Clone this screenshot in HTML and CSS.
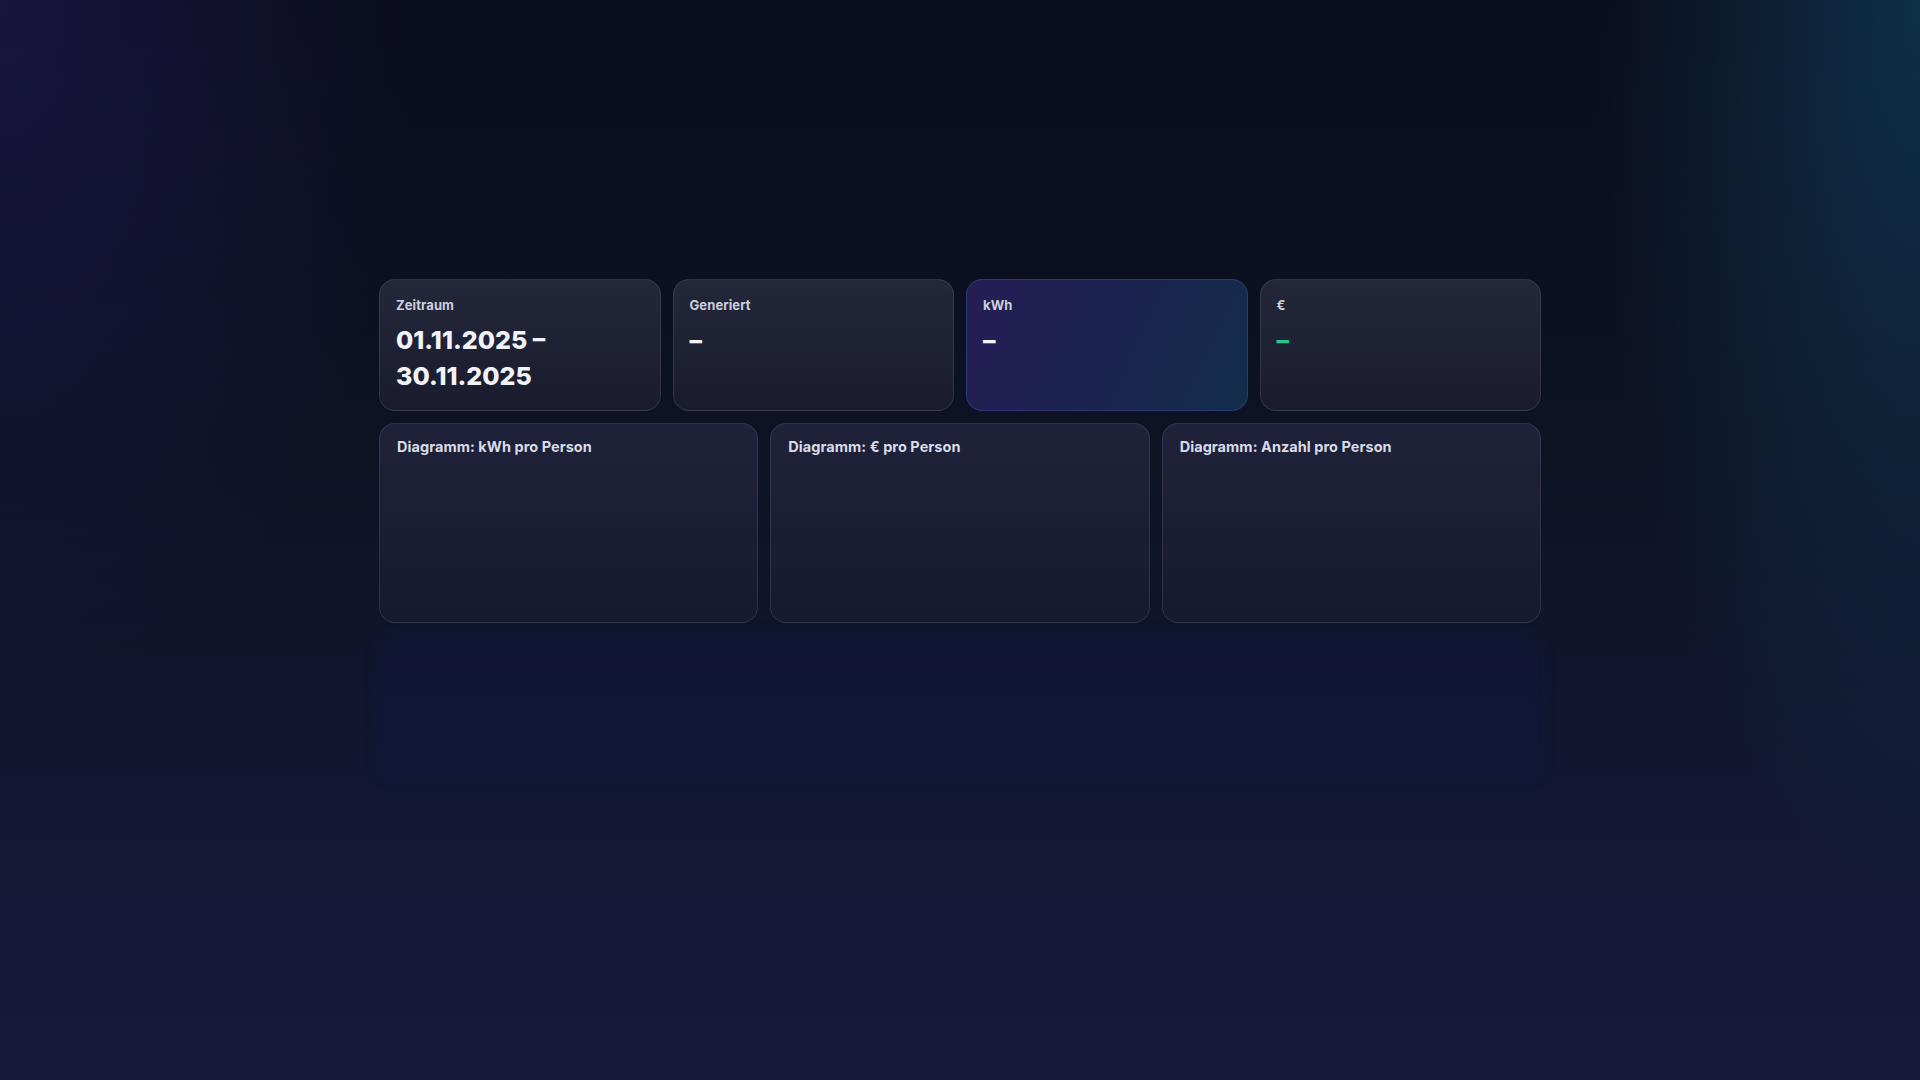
FILE: index.html
```html
<!DOCTYPE html>
<html lang="de">
<head>
<meta charset="utf-8">
<title>Dashboard</title>
<link rel="stylesheet" href="styles.css">
</head>
<body>
<main class="page">
  <section class="stats">
    <div class="card stat">
      <div class="label">Zeitraum</div>
      <div class="value">01.11.2025 – 30.11.2025</div>
    </div>
    <div class="card stat">
      <div class="label">Generiert</div>
      <div class="value">–</div>
    </div>
    <div class="card stat accent">
      <div class="label">kWh</div>
      <div class="value">–</div>
    </div>
    <div class="card stat">
      <div class="label">€</div>
      <div class="value green">–</div>
    </div>
  </section>
  <section class="charts">
    <div class="card chart"><h3 class="chart-title">Diagramm: kWh pro Person</h3></div>
    <div class="card chart"><h3 class="chart-title">Diagramm: € pro Person</h3></div>
    <div class="card chart"><h3 class="chart-title">Diagramm: Anzahl pro Person</h3></div>
  </section>
  <section class="ghost"></section>
</main>
</body>
</html>
```
FILE: styles.css
```css
* { box-sizing: border-box; }
html, body { margin: 0; padding: 0; }
body {
  min-height: 100vh;
  font-family: Inter, "Noto Sans", "Liberation Sans", sans-serif;
  color: #e5e7ef;
  background:
    radial-gradient(ellipse 420px 700px at 0% 0%, rgba(40, 30, 100, 0.45), rgba(40, 30, 100, 0) 100%),
    radial-gradient(ellipse 330px 900px at 100% 0%, rgba(18, 70, 100, 0.6), rgba(18, 70, 100, 0) 100%),
    linear-gradient(180deg, #0a0d1d 0%, #0d1224 40%, #121833 75%, #161a3b 100%);
}
.page {
  width: 1162px;
  margin: 0 auto;
  padding-top: 279px;
}
.stats {
  display: grid;
  grid-template-columns: repeat(4, 1fr);
  gap: 12px;
}
.card {
  border: 1px solid rgba(255, 255, 255, 0.1);
  border-radius: 16px;
  background: linear-gradient(180deg, #24273a 0%, #1a1c2e 100%);
}
.stat {
  padding: 16px 16px 16px 16px;
}
.stat.accent {
  background: linear-gradient(115deg, #261d55 0%, #1c2350 45%, #122d4a 100%);
  border-color: rgba(110, 125, 230, 0.22);
}
.label {
  font-size: 13px;
  line-height: 18px;
  font-weight: 700;
  letter-spacing: 0.1px;
  color: #cdd1de;
  margin-bottom: 8px;
}
.value {
  font-size: 25px;
  line-height: 36px;
  font-weight: 800;
  color: #f1f3f9;
}
.value.green { color: #22c98b; }
.charts {
  margin-top: 12px;
  display: grid;
  grid-template-columns: repeat(3, 1fr);
  gap: 12px;
}
.chart {
  height: 200px;
  padding: 14px 17px;
  background: linear-gradient(180deg, #20223a 0%, #161a2f 100%);
}
.chart-title {
  margin: 0;
  font-size: 14.5px;
  line-height: 18px;
  font-weight: 700;
  letter-spacing: 0.05px;
  color: #d9dce7;
}
.ghost {
  margin-top: 12px;
  height: 143px;
  border-radius: 16px;
  background: rgba(20, 35, 110, 0.11);
  filter: blur(8px);
}
```
